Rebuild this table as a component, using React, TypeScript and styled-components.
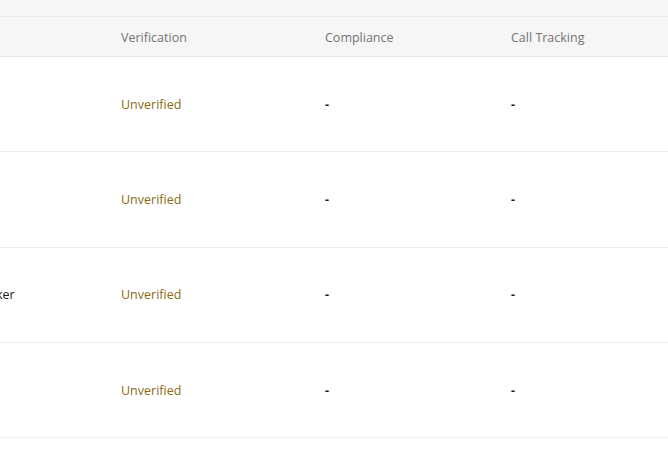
import React from "react";
import styled, { createGlobalStyle } from "styled-components";

const Global = createGlobalStyle`
  html, body { margin: 0; padding: 0; background: #ffffff; }
  body { font-family: "Open Sans", "Liberation Sans", sans-serif; }
  * { box-sizing: border-box; }
`;

const Page = styled.div`
  width: 668px;
  height: 452px;
  overflow: hidden;
  background: #ffffff;
`;

const TopBand = styled.div`
  height: 17px;
  background: #f8f8f8;
  border-bottom: 1px solid #ececec;
`;

const Table = styled.div`
  width: 668px;
`;

const Row = styled.div<{ $head?: boolean }>`
  display: grid;
  grid-template-columns: 105px 204px 186px 1fr;
  align-items: center;
  height: ${(p) => (p.$head ? "40px" : "95.33px")};
  background: ${(p) => (p.$head ? "#f6f6f6" : "#ffffff")};
  border-bottom: 1px solid ${(p) => (p.$head ? "#e6e6e6" : "#ececec")};
`;

const HeadCell = styled.div`
  padding-left: 16px;
  padding-top: 1px;
  font-size: 12.5px;
  color: #737373;
  white-space: nowrap;
`;

const Cell = styled.div<{ $tone?: "status" | "plain" | "dash" }>`
  padding-left: ${(p) => (p.$tone === "plain" ? "0" : "16px")};
  text-indent: ${(p) => (p.$tone === "plain" ? "-4px" : "0")};
  overflow: hidden;
  font-size: 12.5px;
  white-space: nowrap;
  color: ${(p) => (p.$tone === "status" ? "#8a6a12" : "#1a1a1a")};
  font-weight: ${(p) => (p.$tone === "dash" ? 700 : 400)};
`;

const rows = ["", "", "ker", ""];

export default function App() {
  return (
    <Page>
      <Global />
      <TopBand />
      <Table>
        <Row $head>
          <HeadCell />
          <HeadCell>Verification</HeadCell>
          <HeadCell>Compliance</HeadCell>
          <HeadCell>Call Tracking</HeadCell>
        </Row>
        {rows.map((name, i) => (
          <Row key={i}>
            <Cell $tone="plain">{name}</Cell>
            <Cell $tone="status">Unverified</Cell>
            <Cell $tone="dash">-</Cell>
            <Cell $tone="dash">-</Cell>
          </Row>
        ))}
      </Table>
    </Page>
  );
}
